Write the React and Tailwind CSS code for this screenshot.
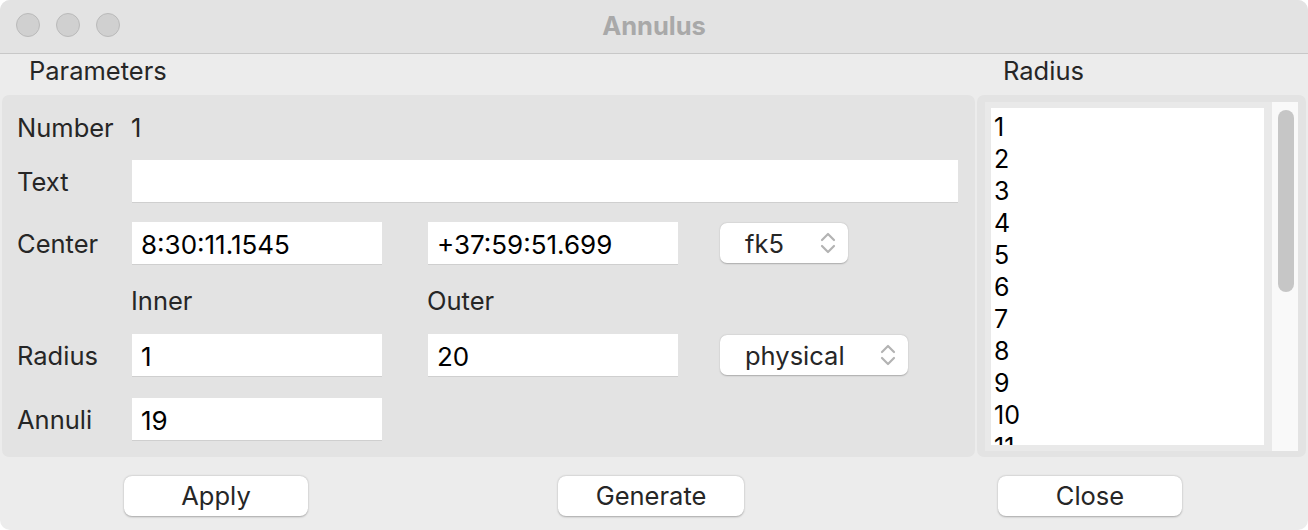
import React from "react";

const FONT = { fontFamily: "Inter, 'Liberation Sans', Arial, sans-serif" };

function Chevrons() {
  return (
    <svg width="16" height="24" viewBox="0 0 16 24" fill="none">
      <path d="M2 9 L8 3 L14 9" stroke="#b3b3b3" strokeWidth="2.2" strokeLinecap="round" strokeLinejoin="round" />
      <path d="M2 15 L8 21 L14 15" stroke="#b3b3b3" strokeWidth="2.2" strokeLinecap="round" strokeLinejoin="round" />
    </svg>
  );
}

function Input({ value, className = "w-[250px]" }) {
  return (
    <div className={`h-[42px] bg-white shadow-[0_1px_0_#cfcfcf] flex items-center pl-[9px] pt-[3px] text-black text-[26px] ${className}`}>
      {value}
    </div>
  );
}

function Select({ value, className }) {
  return (
    <div className={`h-[40px] bg-white rounded-[7px] shadow-[0_0.5px_1.5px_rgba(0,0,0,0.25)] flex items-center justify-between pl-[25px] pr-[12px] text-[#262626] ${className}`}>
      <span className="pt-[2px]">{value}</span>
      <Chevrons />
    </div>
  );
}

function Button({ children, className }) {
  return (
    <div className={`h-[40px] bg-white rounded-[8px] shadow-[0_0.5px_2px_rgba(0,0,0,0.3)] flex items-center justify-center text-[#262626] ${className}`}>
      {children}
    </div>
  );
}

function Label({ children, className = "w-[115px]" }) {
  return <div className={`pt-[3px] ${className}`}>{children}</div>;
}

export default function App() {
  const items = [1, 2, 3, 4, 5, 6, 7, 8, 9, 10, 11];
  return (
    <div className="w-[1308px] h-[530px] bg-white">
      <div
        className="w-[1308px] h-[530px] bg-[#ececec] rounded-[10px] overflow-hidden flex flex-col text-[25.5px]"
        style={FONT}
      >
        {/* Title bar */}
        <div className="h-[54px] shrink-0 bg-[#e3e3e3] border-b border-[#c8c8c8] grid grid-cols-[1fr_auto_1fr] items-center">
          <div className="flex items-center gap-[16px] pl-[16px] pb-[3px]">
            <div className="w-[24px] h-[24px] rounded-full bg-[#d0d0d0] border border-[#bababa]" />
            <div className="w-[24px] h-[24px] rounded-full bg-[#d0d0d0] border border-[#bababa]" />
            <div className="w-[24px] h-[24px] rounded-full bg-[#d0d0d0] border border-[#bababa]" />
          </div>
          <div className="font-bold text-[#a9a9a9] text-[25.5px] pb-[1px]">Annulus</div>
          <div />
        </div>

        {/* Main */}
        <div className="flex px-[2px] gap-[2px]">
          {/* Left column */}
          <div className="w-[973px] flex flex-col">
            <div className="h-[41px] flex items-center pl-[27px] pb-[6px] text-[#262626]">Parameters</div>
            <div className="h-[362px] bg-[#e3e3e3] rounded-[7px] flex flex-col pl-[15px] pt-[11px] text-[#262626]">
              <div className="h-[42px] flex items-center">
                <Label className="w-[114px]">Number</Label>
                <Label className="">1</Label>
              </div>
              <div className="h-[42px] flex items-center mt-[12px]">
                <Label>Text</Label>
                <Input value="" className="w-[826px]" />
              </div>
              <div className="h-[42px] flex items-center mt-[20px]">
                <Label>Center</Label>
                <Input value="8:30:11.1545" />
                <Input value="+37:59:51.699" className="w-[250px] ml-[46px]" />
                <Select value="fk5" className="w-[128px] ml-[42px]" />
              </div>
              <div className="h-[42px] flex items-center mt-[15px]">
                <div className="w-[114px]" />
                <Label className="w-[250px]">Inner</Label>
                <Label className="ml-[46px]">Outer</Label>
              </div>
              <div className="h-[42px] flex items-center mt-[13px]">
                <Label>Radius</Label>
                <Input value="1" />
                <Input value="20" className="w-[250px] ml-[46px]" />
                <Select value="physical" className="w-[188px] ml-[42px]" />
              </div>
              <div className="h-[42px] flex items-center mt-[22px]">
                <Label>Annuli</Label>
                <Input value="19" />
              </div>
            </div>
          </div>

          {/* Right column */}
          <div className="w-[329px] flex flex-col">
            <div className="h-[41px] flex items-center pl-[26px] pb-[6px] text-[#262626]">Radius</div>
            <div className="h-[362px] bg-[#e3e3e3] rounded-[7px] pl-[8px] pr-[8px] pt-[7px] pb-[6px] flex">
              <div className="flex-1 bg-[#e9e9e9] flex">
                <div className="flex-1 m-[6px] mr-[8px] bg-white overflow-hidden pl-[3px] pt-[3px] text-black text-[25px]">
                  {items.map((n) => (
                    <div key={n} className="h-[32px] leading-[32px]">{n}</div>
                  ))}
                </div>
                <div className="w-[26px] bg-[#f9f9f9] pt-[8px] pl-[6px]">
                  <div className="w-[16px] h-[182px] rounded-full bg-[#c6c6c6]" />
                </div>
              </div>
            </div>
          </div>
        </div>

        {/* Buttons */}
        <div className="flex mt-[19px]">
          <Button className="w-[184px] ml-[124px]">Apply</Button>
          <Button className="w-[186px] ml-[250px]">Generate</Button>
          <Button className="w-[184px] ml-[254px]">Close</Button>
        </div>
      </div>
    </div>
  );
}
